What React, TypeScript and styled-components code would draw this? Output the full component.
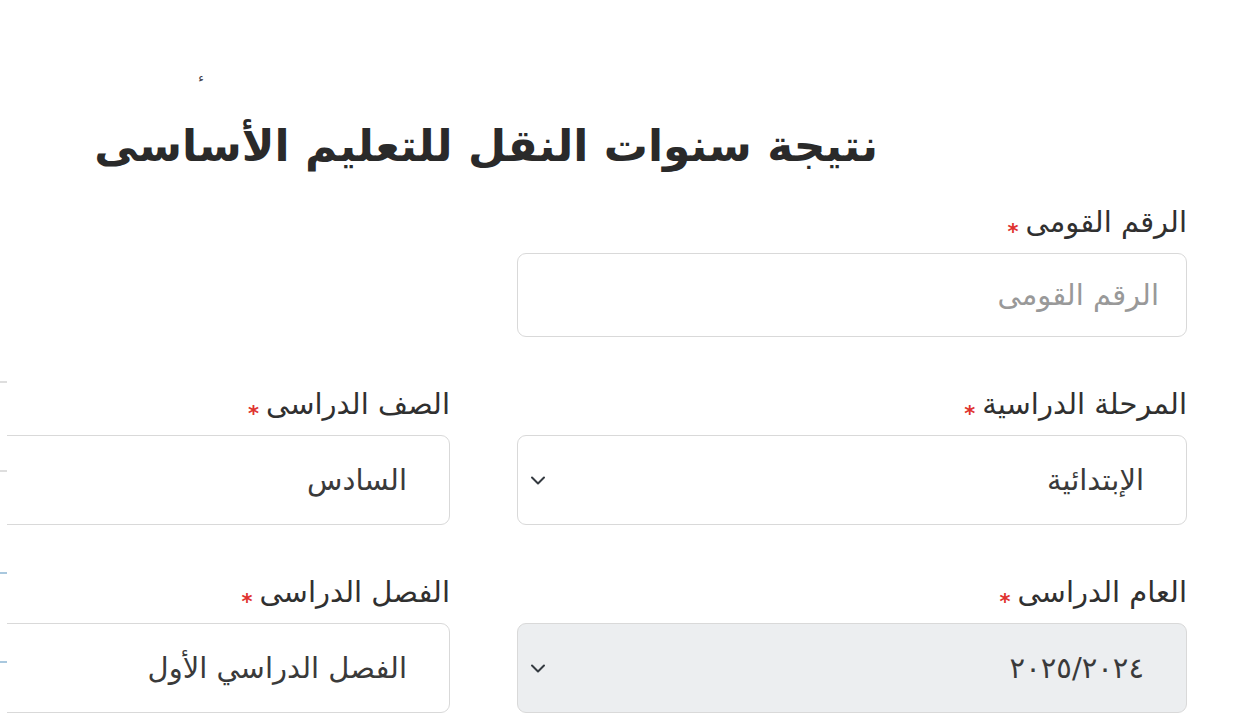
import React from "react";
import styled, { createGlobalStyle } from "styled-components";

const GlobalStyle = createGlobalStyle`
  html, body {
    margin: 0;
    padding: 0;
    background: #ffffff;
    overflow: hidden;
  }
  body {
    font-family: "DejaVu Sans", "Noto Sans", sans-serif;
  }
  * { box-sizing: border-box; }
`;

const Page = styled.div`
  display: flex;
  width: 1250px;
  height: 720px;
  overflow: hidden;
  background: #fff;
`;

const LeftStrip = styled.div`
  flex: 0 0 7px;
  display: flex;
  flex-direction: column;
  gap: 100px;
  padding-top: 381px;
`;

const StripBox = styled.div<{ $tone: "gray" | "blue" }>`
  height: 91px;
  border-top: 2px solid ${(p) => (p.$tone === "gray" ? "#dedede" : "#a9c8de")};
  border-bottom: 2px solid ${(p) => (p.$tone === "gray" ? "#dedede" : "#a9c8de")};
`;

const Main = styled.main`
  flex: 1;
  min-width: 0;
  overflow: hidden;
  direction: rtl;
  padding-right: 63px;
  display: flex;
  flex-direction: column;
`;

const TopMark = styled.div`
  padding-top: 70px;
  padding-right: 983px;
  height: 86px;
  font-size: 12px;
  line-height: 16px;
  color: #3a3a48;
`;

const Title = styled.h1`
  margin: 30px 309px 0 0;
  font-size: 44px;
  line-height: 60px;
  font-weight: 700;
  color: #2a2a2a;
  white-space: nowrap;
`;

const FormGrid = styled.div`
  margin-top: 28px;
  display: grid;
  grid-template-columns: 670px 670px;
  column-gap: 67px;
  row-gap: 49px;
  width: 1407px;
`;

const Field = styled.div`
  display: flex;
  flex-direction: column;
`;

const Label = styled.label`
  display: block;
  font-size: 29px;
  line-height: 36px;
  height: 36px;
  color: #303030;
  margin-bottom: 13px;
  white-space: nowrap;
`;

const Req = styled.span`
  color: #e0332f;
  font-size: 21px;
  font-weight: 700;
  line-height: 0;
  margin-right: 7px;
  vertical-align: -7px;
`;

const InputBox = styled.div`
  height: 84px;
  border: 1.5px solid #d9d9d9;
  border-radius: 9px;
  display: flex;
  align-items: center;
  padding-right: 27px;
  font-size: 29px;
  color: #999999;
  white-space: nowrap;
`;

const SelectBox = styled.div<{ $disabled?: boolean }>`
  height: 90px;
  border: 1.5px solid #d9d9d9;
  border-radius: 9px;
  background: ${(p) => (p.$disabled ? "#eceef0" : "#ffffff")};
  display: flex;
  align-items: center;
  justify-content: space-between;
  padding: 0 42px 0 12px;
  font-size: 29px;
  color: #3a3a3a;
  white-space: nowrap;
`;

const Value = styled.span`
  display: block;
`;

const Chevron = () => (
  <svg width="16" height="16" viewBox="0 0 16 16" fill="none" aria-hidden="true">
    <path
      d="M2 5.5l6 6 6-6"
      stroke="#343a40"
      strokeWidth="2"
      strokeLinecap="round"
      strokeLinejoin="round"
    />
  </svg>
);

type SelectFieldProps = {
  label: string;
  value: string;
  disabled?: boolean;
};

const SelectField = ({ label, value, disabled }: SelectFieldProps) => (
  <Field>
    <Label>
      {label}
      <Req>*</Req>
    </Label>
    <SelectBox $disabled={disabled}>
      <Value>{value}</Value>
      <Chevron />
    </SelectBox>
  </Field>
);

export default function App() {
  return (
    <>
      <GlobalStyle />
      <Page>
        <LeftStrip>
          <StripBox $tone="gray" />
          <StripBox $tone="blue" />
        </LeftStrip>
        <Main>
          <TopMark>ء</TopMark>
          <Title>نتيجة سنوات النقل للتعليم الأساسى</Title>
          <FormGrid>
            <Field>
              <Label>
                الرقم القومى
                <Req>*</Req>
              </Label>
              <InputBox>الرقم القومى</InputBox>
            </Field>
            <div />
            <SelectField label="المرحلة الدراسية" value="الإبتدائية" />
            <SelectField label="الصف الدراسى" value="السادس" />
            <SelectField label="العام الدراسى" value="٢٠٢٥/٢٠٢٤" disabled />
            <SelectField label="الفصل الدراسى" value="الفصل الدراسي الأول" />
          </FormGrid>
        </Main>
      </Page>
    </>
  );
}
